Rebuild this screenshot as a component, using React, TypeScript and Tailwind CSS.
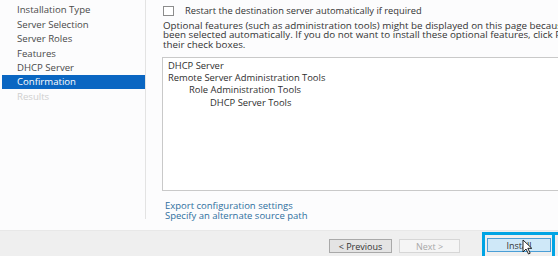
import { useState } from 'react'

const steps = [
  'Installation Type',
  'Server Selection',
  'Server Roles',
  'Features',
  'DHCP Server',
  'Confirmation',
  'Results',
]

const items = [
  { label: 'DHCP Server', indent: 'pl-0' },
  { label: 'Remote Server Administration Tools', indent: 'pl-0' },
  { label: 'Role Administration Tools', indent: 'pl-[21px]' },
  { label: 'DHCP Server Tools', indent: 'pl-[42px]' },
]

function Cursor() {
  return (
    <svg
      width="11"
      height="16"
      viewBox="0 0 11 16"
      className="pointer-events-none absolute left-[37px] top-[4px]"
    >
      <path
        d="M1 1 L1 13 L4 10 L6.5 15 L8.2 14.2 L5.8 9.3 L9.8 9.3 Z"
        fill="#fff"
        stroke="#111"
        strokeWidth="0.9"
        strokeLinejoin="round"
      />
    </svg>
  )
}

export default function App() {
  const [restart, setRestart] = useState(false)
  const current = 'Confirmation'

  return (
    <div className="flex h-[256px] w-[558px] flex-col overflow-hidden bg-[#fcfcfd] font-['Open_Sans',sans-serif] text-[#333]">
      <div className="flex h-[230px] min-h-0">
        <nav className="flex h-[219px] w-[146px] shrink-0 flex-col border-r border-[#e3e3e3] pt-[3px] pl-[2px]">
          {steps.map((s) => (
            <div
              key={s}
              className={`flex h-[14.4px] items-center pl-[15px] text-[9.6px] leading-none ${
                s === current
                  ? 'bg-[#0a66c2] text-white'
                  : s === 'Results'
                    ? 'text-[#cfcfcf]'
                    : 'text-[#4a4a4a]'
              }`}
            >
              {s}
            </div>
          ))}
        </nav>

        <main className="flex min-w-0 flex-1 flex-col overflow-hidden pl-[17px]">
          <label className="mt-[6px] flex items-center gap-[11px] text-[9.3px] leading-none text-[#333]">
            <input
              type="checkbox"
              checked={restart}
              onChange={(e) => setRestart(e.target.checked)}
              className="h-[10px] w-[11px] shrink-0 appearance-none border border-[#8c8c8c] bg-white"
            />
            <span className="whitespace-nowrap">Restart the destination server automatically if required</span>
          </label>

          <p className="mt-[5px] text-[9.8px] leading-[9.4px] text-[#333]">
            <span className="block whitespace-nowrap">
              Optional features (such as administration tools) might be displayed on this page because they have
            </span>
            <span className="block whitespace-nowrap">
              been selected automatically. If you do not want to install these optional features, click Previous to clear
            </span>
            <span className="block whitespace-nowrap">their check boxes.</span>
          </p>

          <div className="mt-[8px] ml-[-1px] flex h-[134px] w-[420px] shrink-0 flex-col border border-[#c9c9c9] bg-white pt-[1px] pl-[5px]">
            {items.map((it) => (
              <div
                key={it.label}
                className={`flex h-[12.3px] items-center whitespace-nowrap text-[9.4px] leading-none text-[#2f2f2f] ${it.indent}`}
              >
                {it.label}
              </div>
            ))}
          </div>

          <div className="mt-[10px] flex flex-col pl-[2px] text-[9.5px] leading-[10px] text-[#2e6f9e]">
            <a className="w-fit cursor-pointer">Export configuration settings</a>
            <a className="w-fit cursor-pointer">Specify an alternate source path</a>
          </div>
        </main>
      </div>

      <footer className="flex h-[26px] shrink-0 items-start justify-end border-t border-[#e8e8e8] bg-[#efefef] pt-[1px]">
        <button className="mt-[7px] flex h-[14px] w-[63px] items-center justify-center border border-[#a9a9a9] bg-[#e4e4e4] text-[9px] leading-none text-[#333]">
          &lt; Previous
        </button>
        <button
          disabled
          className="mt-[7px] ml-[7px] flex h-[14px] w-[61px] items-center justify-center border border-[#d6d6d6] bg-[#f5f5f5] text-[9px] leading-none text-[#a8a8a8]"
        >
          Next &gt;
        </button>
        <div className="relative ml-[22px] h-[25px] w-[76px] shrink-0 border-[3px] border-r-0 border-b-0 border-[#00a4e4] pt-[3px] pl-[2px]">
          <button className="flex h-[14px] w-[64px] items-center justify-center border border-[#4a9ed6] bg-[#cfe8f8] text-[9px] leading-none text-[#333]">
            Install
          </button>
          <div className="absolute top-[-3px] right-[3px] h-[25px] w-[3px] bg-[#00a4e4]" />
          <Cursor />
        </div>
      </footer>
    </div>
  )
}
